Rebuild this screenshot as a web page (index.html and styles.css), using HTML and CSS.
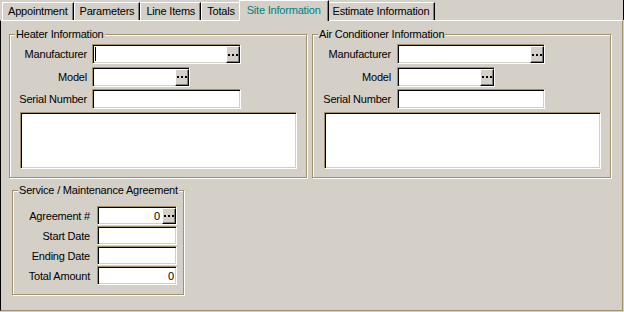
FILE: index.html
```html
<!DOCTYPE html>
<html>
<head>
<meta charset="utf-8">
<link rel="stylesheet" href="styles.css">
</head>
<body>
<div class="tabs">
  <div class="tab">Appointment</div>
  <div class="tab">Parameters</div>
  <div class="tab">Line Items</div>
  <div class="tab">Totals</div>
  <div class="tab active">Site Information</div>
  <div class="tab">Estimate Information</div>
</div>
<div class="panel">
  <div class="top-row">
    <fieldset class="group heater">
      <legend>Heater Information</legend>
      <div class="form">
        <label>Manufacturer</label>
        <div class="field w-long"><span class="caret"></span><span class="btn"><i class="dots"></i></span></div>
        <label>Model</label>
        <div class="field w-short"><span class="btn"><i class="dots"></i></span></div>
        <label>Serial Number</label>
        <div class="field w-long"></div>
      </div>
      <div class="memo"></div>
    </fieldset>
    <fieldset class="group air">
      <legend>Air Conditioner Information</legend>
      <div class="form">
        <label>Manufacturer</label>
        <div class="field w-long2"><span class="btn"><i class="dots"></i></span></div>
        <label>Model</label>
        <div class="field w-short"><span class="btn"><i class="dots"></i></span></div>
        <label>Serial Number</label>
        <div class="field w-long2"></div>
      </div>
      <div class="memo"></div>
    </fieldset>
  </div>
  <fieldset class="group service">
    <legend>Service / Maintenance Agreement</legend>
    <div class="form">
      <label>Agreement #</label>
      <div class="field small"><span class="val">0</span><span class="btn"><i class="dots"></i></span></div>
      <label>Start Date</label>
      <div class="field small"></div>
      <label>Ending Date</label>
      <div class="field small"></div>
      <label>Total Amount</label>
      <div class="field small"><span class="val end">0</span></div>
    </div>
  </fieldset>
</div>
</body>
</html>
```
FILE: styles.css
```css
html, body {
  margin: 0;
  padding: 0;
}
body {
  width: 624px;
  height: 312px;
  overflow: hidden;
  background: #d4d0c8;
  font-family: "Liberation Sans", Arial, sans-serif;
  font-size: 11px;
  letter-spacing: -0.2px;
  color: #000;
}

/* ---------- tabs ---------- */
.tabs {
  display: flex;
  align-items: flex-end;
  box-sizing: border-box;
  width: 624px;
  height: 20px;
  padding-left: 2px;
  border-right: 1px solid #000;
}
.tab {
  box-sizing: border-box;
  height: 18px;
  line-height: 17px;
  padding: 0 5px;
  border-top: 1px solid #fff;
  border-left: 1px solid #fff;
  border-right: 1px solid #000;
  box-shadow: inset -1px 0 0 #808080;
  white-space: nowrap;
}
.tab.active {
  position: relative;
  z-index: 1;
  height: 21px;
  line-height: 18px;
  margin: 0 -2px -1px;
  padding: 0 7px;
  background: #d4d0c8;
  color: #008080;
}

/* ---------- panel ---------- */
.panel {
  box-sizing: border-box;
  width: 623px;
  height: 291px;
  border-style: solid;
  border-width: 1px;
  border-color: #fff #a0906c #a0906c #000;
  padding: 7px 0 0 8px;
}
.top-row {
  display: flex;
  gap: 5px;
}

/* ---------- group boxes ---------- */
.group {
  box-sizing: border-box;
  margin: 0;
  padding: 0;
  min-inline-size: 0;
  border: 1px solid #a0906c;
  box-shadow: inset 1px 1px 0 #fff, 1px 1px 0 #fff;
}
.group legend {
  margin-left: 5px;
  padding: 0 1px;
  line-height: 13px;
  background: #d4d0c8;
  white-space: nowrap;
}
.heater { width: 298px; height: 150px; }
.air { width: 299px; height: 150px; }
.service { width: 172px; height: 111px; margin: 6px 0 0 3px; }

.form {
  display: grid;
  grid-template-columns: 82px auto;
  row-gap: 2.5px;
  align-items: center;
  justify-items: start;
  padding-top: 3px;
}
.form label {
  justify-self: stretch;
  text-align: right;
  padding-right: 5px;
  white-space: nowrap;
}
.air .form { grid-template-columns: 84px auto; }
.air .form label { padding-right: 6px; }
.service .form {
  grid-template-columns: 84px 80px;
  row-gap: 1px;
  padding-top: 9px;
}
.service .form label { padding-right: 7px; }

/* ---------- sunken fields ---------- */
.field, .memo {
  box-sizing: border-box;
  background: #fff;
  border-style: solid;
  border-width: 1px;
  border-color: #a0906c #fff #fff #a0906c;
  box-shadow: inset 1px 1px 0 #000, inset -1px -1px 0 #d4d0c8;
}
.field {
  height: 20px;
  display: flex;
  align-items: center;
}
.w-long { width: 149px; }
.w-long2 { width: 148px; }
.w-short { width: 98px; }
.field.small { height: 19px; width: 80px; }

.memo {
  width: 277px;
  height: 57px;
  margin: 3px 0 0 10px;
}
.air .memo { margin-left: 11px; }

.caret {
  width: 1px;
  height: 14px;
  margin-left: 2px;
  background: #000;
}
.val {
  margin-left: auto;
  padding-right: 2px;
}

.btn {
  box-sizing: border-box;
  align-self: flex-end;
  width: 14px;
  height: 17px;
  margin-left: auto;
  background: #d4d0c8;
  border-top: 1px solid #fff;
  border-left: 1px solid #fff;
  border-right: 1px solid #000;
  border-bottom: 1px solid #000;
  box-shadow: inset -1px -1px 0 #808080;
  display: flex;
  align-items: center;
  justify-content: center;
}
.small .btn { height: 16px; }
.val + .btn { margin-left: 0; }
.dots {
  display: block;
  width: 10px;
  height: 2px;
  background: linear-gradient(90deg, #000 0 2px, transparent 2px 4px, #000 4px 6px, transparent 6px 8px, #000 8px 10px);
}
```
